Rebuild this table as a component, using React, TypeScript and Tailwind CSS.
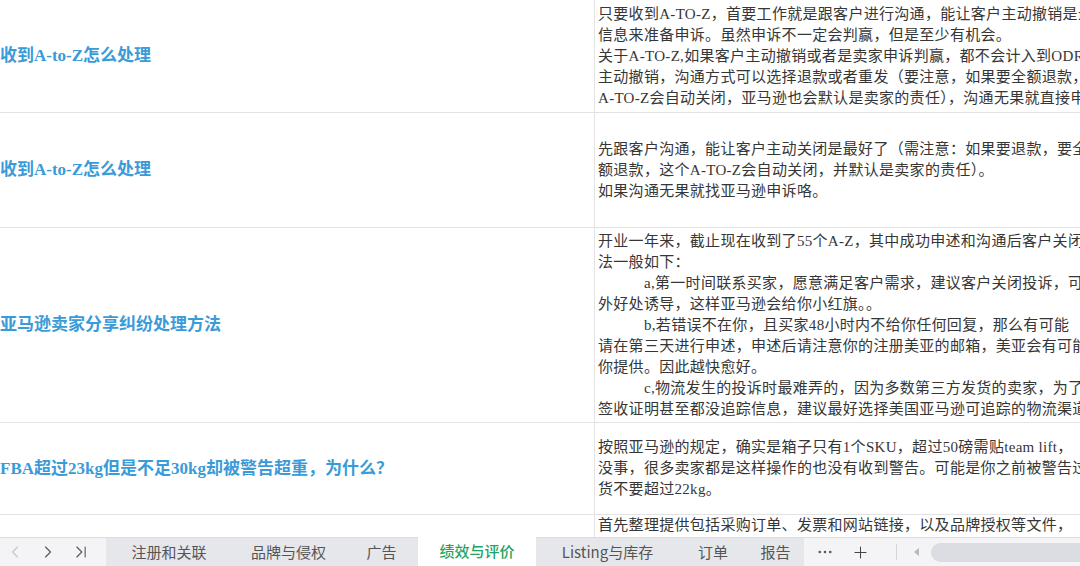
import React from 'react';
import { ChevronLeft, ChevronRight, ChevronLast, Ellipsis, Plus } from 'lucide-react';

interface Line {
  text: string;
  indent?: boolean;
}

interface Row {
  height: string;
  title: string;
  lines: Line[];
}

const rows: Row[] = [
  {
    height: 'h-[113px]',
    title: '收到A-to-Z怎么处理',
    lines: [
      { text: '只要收到A-TO-Z，首要工作就是跟客户进行沟通，能让客户主动撤销是最好的，不能就收集' },
      { text: '信息来准备申诉。虽然申诉不一定会判赢，但是至少有机会。' },
      { text: '关于A-TO-Z,如果客户主动撤销或者是卖家申诉判赢，都不会计入到ODR中。' },
      { text: '主动撤销，沟通方式可以选择退款或者重发（要注意，如果要全额退款，' },
      { text: 'A-TO-Z会自动关闭，亚马逊也会默认是卖家的责任），沟通无果就直接申诉。' },
    ],
  },
  {
    height: 'h-[115px]',
    title: '收到A-to-Z怎么处理',
    lines: [
      { text: '先跟客户沟通，能让客户主动关闭是最好了（需注意：如果要退款，要全' },
      { text: '额退款，这个A-TO-Z会自动关闭，并默认是卖家的责任）。' },
      { text: '如果沟通无果就找亚马逊申诉咯。' },
    ],
  },
  {
    height: 'h-[195px]',
    title: '亚马逊卖家分享纠纷处理方法',
    lines: [
      { text: '开业一年来，截止现在收到了55个A-Z，其中成功申述和沟通后客户关闭的做' },
      { text: '法一般如下：' },
      { text: 'a,第一时间联系买家，愿意满足客户需求，建议客户关闭投诉，可以用额', indent: true },
      { text: '外好处诱导，这样亚马逊会给你小红旗。。' },
      { text: 'b,若错误不在你，且买家48小时内不给你任何回复，那么有可能', indent: true },
      { text: '请在第三天进行申述，申述后请注意你的注册美亚的邮箱，美亚会有可能要' },
      { text: '你提供。因此越快愈好。' },
      { text: 'c,物流发生的投诉时最难弄的，因为多数第三方发货的卖家，为了', indent: true },
      { text: '签收证明甚至都没追踪信息，建议最好选择美国亚马逊可追踪的物流渠道。' },
    ],
  },
  {
    height: 'h-[92px]',
    title: 'FBA超过23kg但是不足30kg却被警告超重，为什么？',
    lines: [
      { text: '按照亚马逊的规定，确实是箱子只有1个SKU，超过50磅需贴team lift，' },
      { text: '没事，很多卖家都是这样操作的也没有收到警告。可能是你之前被警告过' },
      { text: '货不要超过22kg。' },
    ],
  },
  {
    height: 'h-[22px]',
    title: '',
    lines: [{ text: '首先整理提供包括采购订单、发票和网站链接，以及品牌授权等文件，' }],
  },
];

const tabs = [
  { name: '注册和关联', width: 'w-[126px]' },
  { name: '品牌与侵权', width: 'w-[113px]' },
  { name: '广告', width: 'w-[73px]' },
  { name: '绩效与评价', width: 'w-[118px]', active: true },
  { name: 'Listing与库存', width: 'w-[143px]' },
  { name: '订单', width: 'w-[68px]' },
  { name: '报告', width: 'w-[57px]' },
];

export default function App() {
  return (
    <div className="w-[1080px] h-[566px] bg-white flex flex-col overflow-hidden">
      {/* Sheet rows */}
      <div className="h-[537px] overflow-hidden flex flex-col">
        {rows.map((row, i) => (
          <div
            key={i}
            className={`${row.height} shrink-0 flex ${i === 4 ? '' : 'border-b border-[#e3e3e3]'}`}
          >
            <div className="w-[595px] shrink-0 border-r border-[#e3e3e3] flex items-center overflow-hidden">
              <span className="whitespace-nowrap text-[17px] font-bold text-[#3a9bd8] font-['Liberation_Serif','Noto_Sans_CJK_SC',serif]">
                {row.title}
              </span>
            </div>
            <div className={`flex-1 flex flex-col overflow-hidden pl-[3px] ${i === 4 ? 'justify-start' : 'justify-center'}`}>
              {row.lines.map((line, j) => (
                <div
                  key={j}
                  className={`whitespace-nowrap text-[15px] leading-[21px] tracking-[0.3px] text-[#363636] font-['Liberation_Serif','Noto_Sans_CJK_SC',serif] ${line.indent ? 'pl-[46px]' : ''}`}
                >
                  {line.text}
                </div>
              ))}
            </div>
          </div>
        ))}
      </div>

      {/* Sheet tabs */}
      <div className="h-[29px] flex items-stretch bg-[#f4f4f6] border-t border-[#dcdcdf] font-['Noto_Sans_CJK_SC',sans-serif] text-[15px]">
        <div className="w-[106px] flex items-center">
          <ChevronLeft className="ml-[5px] h-[20px] w-[20px] text-[#c4c4c8]" strokeWidth={1.3} />
          <ChevronRight className="ml-[13px] h-[20px] w-[20px] text-[#555555]" strokeWidth={1.3} />
          <ChevronLast className="ml-[13px] h-[20px] w-[20px] text-[#555555]" strokeWidth={1.3} />
        </div>
        {tabs.map(tab => (
          <div
            key={tab.name}
            className={`${tab.width} flex items-center justify-center whitespace-nowrap ${
              tab.active ? 'bg-white text-[#1fa463] font-medium -mt-[2px]' : 'bg-[#e6e7eb] text-[#555555]'
            }`}
          >
            {tab.name}
          </div>
        ))}
        <div className="flex-1 flex items-center">
          <Ellipsis className="ml-[12px] h-[18px] w-[18px] text-[#555555]" strokeWidth={1.5} />
          <Plus className="ml-[17px] h-[19px] w-[19px] text-[#444444]" strokeWidth={1.3} />
          <div className="ml-[26px] h-[16px] w-px bg-[#d6d6da]" />
          <svg className="ml-[17px]" width="5" height="8" viewBox="0 0 5 8">
            <path d="M5 0 L0 4 L5 8 Z" fill="#b8b8bd" />
          </svg>
          <div className="ml-[12px] flex-1 h-[19px] rounded-l-full bg-[#dcdde2]" />
        </div>
      </div>
    </div>
  );
}
